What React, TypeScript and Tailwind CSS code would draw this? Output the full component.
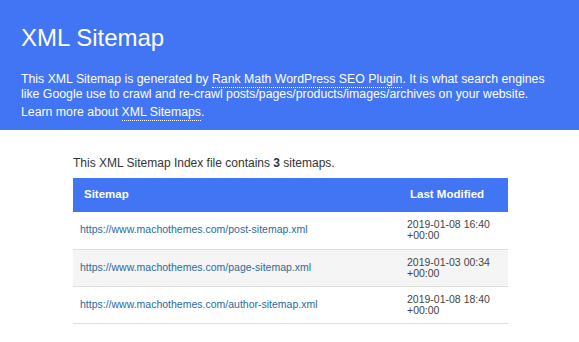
import React from "react";

const rows = [
  { url: "https://www.machothemes.com/post-sitemap.xml", date: "2019-01-08 16:40", tz: "+00:00" },
  { url: "https://www.machothemes.com/page-sitemap.xml", date: "2019-01-03 00:34", tz: "+00:00" },
  { url: "https://www.machothemes.com/author-sitemap.xml", date: "2019-01-08 18:40", tz: "+00:00" },
];

export default function App() {
  return (
    <div className="w-[579px] h-[342px] bg-white overflow-hidden" style={{ fontFamily: '"Liberation Sans", Arial, sans-serif' }}>
      <div className="bg-[#4275f4] text-white px-[21px] pt-[24px] h-[130px]">
        <h1 className="text-[24px] leading-[28px]">XML Sitemap</h1>
        <p className="mt-[20px] text-[12.3px] leading-[15px] whitespace-nowrap">
          This XML Sitemap is generated by{" "}
          <a className="border-b border-dotted border-white pb-[1px]">Rank Math WordPress SEO Plugin</a>. It is what search engines
          <br />
          like Google use to crawl and re-crawl posts/pages/products/images/archives on your website.
        </p>
        <p className="mt-[2px] text-[12.3px] leading-[16px] whitespace-nowrap">
          Learn more about <a className="border-b border-dotted border-white pb-[1px]">XML Sitemaps</a>.
        </p>
      </div>
      <div className="pl-[73px] pt-[27px] w-[508px] box-content">
        <p className="text-[12px] text-[#333] leading-[13px]">
          This XML Sitemap Index file contains <b>3</b> sitemaps.
        </p>
        <table className="mt-[8px] w-[435px] border-collapse text-[10.5px]">
          <thead>
            <tr className="bg-[#4275f4] text-white h-[34px] text-[11.5px]">
              <th className="text-left font-bold pl-[11px]">Sitemap</th>
              <th className="text-left font-bold pl-[3px] w-[101px]">Last Modified</th>
            </tr>
          </thead>
          <tbody>
            {rows.map((r, i) => (
              <tr key={i} className={`border-b border-[#dddddd] h-[37px] ${i === 1 ? "bg-[#f5f5f5]" : "bg-white"}`}>
                <td className="pl-[7px] text-[#2b6a9b]">{r.url}</td>
                <td className="text-[#444] leading-[11px]">
                  {r.date}
                  <br />
                  {r.tz}
                </td>
              </tr>
            ))}
          </tbody>
        </table>
      </div>
    </div>
  );
}
